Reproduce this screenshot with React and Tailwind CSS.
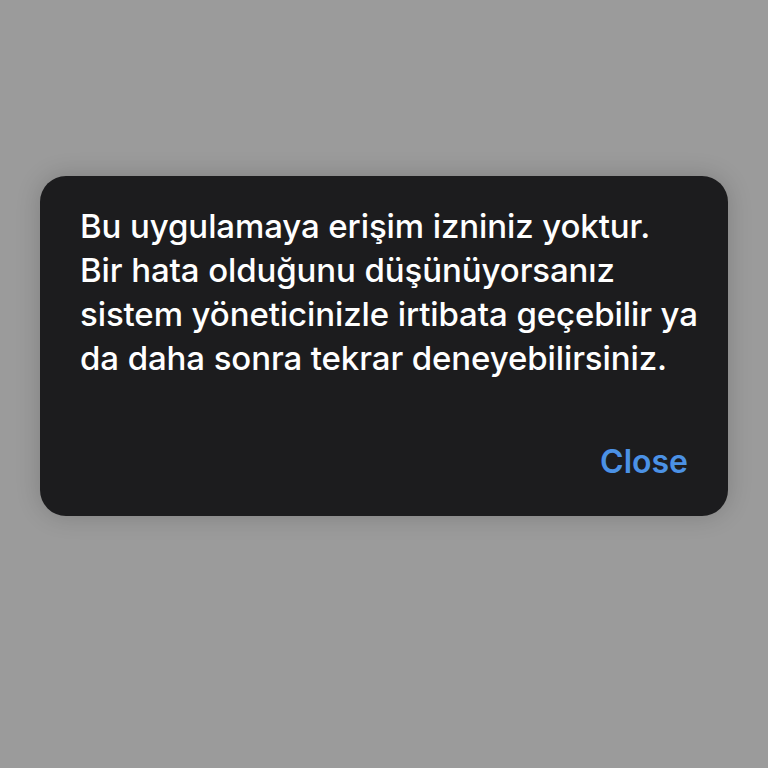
export default function App() {
  return (
    <div className="min-h-screen w-full bg-[#9b9b9b] flex items-start justify-center pt-[176px]" style={{ fontFamily: 'Inter, "Noto Sans", sans-serif' }}>
      <div className="w-[688px] h-[340px] bg-[#1c1c1e] rounded-[26px] shadow-[0_0_24px_rgba(0,0,0,0.18)] pl-10 pr-5 pt-[28px] flex flex-col">
        <p className="text-white text-[33px] leading-[44px] font-medium tracking-[-0.1px]">
          Bu uygulamaya erişim izniniz yoktur.
          <br />
          Bir hata olduğunu düşünüyorsanız sistem yöneticinizle irtibata geçebilir ya da daha sonra tekrar deneyebilirsiniz.
        </p>
        <div className="flex justify-end mt-[62px] pr-5">
          <button className="text-[#4b91e5] text-[32px] font-semibold leading-[40px]">Close</button>
        </div>
      </div>
    </div>
  );
}
